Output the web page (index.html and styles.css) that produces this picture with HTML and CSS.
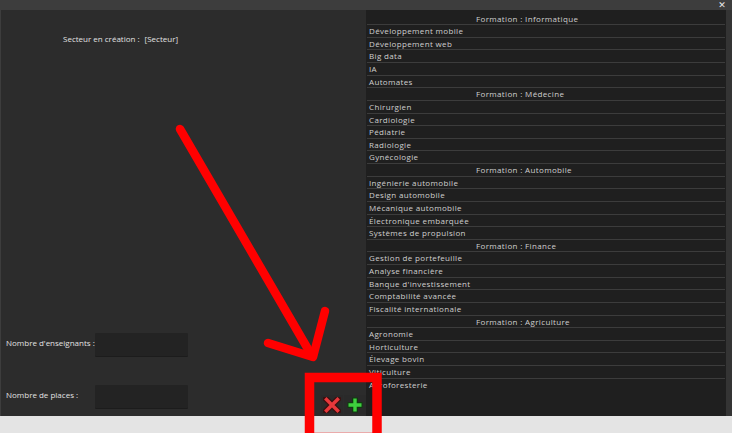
FILE: index.html
```html
<!DOCTYPE html>
<html lang="fr">
<head>
<meta charset="utf-8">
<link rel="stylesheet" href="styles.css">
</head>
<body>
<div class="window">
  <div class="titlebar"><span class="close">✕</span></div>
  <div class="main">
    <div class="left">
      <div class="sector"><span>Secteur en création :</span><span>[Secteur]</span></div>
      <div class="spacer"></div>
      <div class="field"><label>Nombre d'enseignants :</label><div class="input"></div></div>
      <div class="field"><label>Nombre de places :</label><div class="input"></div></div>
    </div>
    <div class="list">
      <div class="row head">Formation : Informatique</div>
      <div class="row">Développement mobile</div>
      <div class="row">Développement web</div>
      <div class="row">Big data</div>
      <div class="row">IA</div>
      <div class="row">Automates</div>
      <div class="row head">Formation : Médecine</div>
      <div class="row">Chirurgien</div>
      <div class="row">Cardiologie</div>
      <div class="row">Pédiatrie</div>
      <div class="row">Radiologie</div>
      <div class="row">Gynécologie</div>
      <div class="row head">Formation : Automobile</div>
      <div class="row">Ingénierie automobile</div>
      <div class="row">Design automobile</div>
      <div class="row">Mécanique automobile</div>
      <div class="row">Électronique embarquée</div>
      <div class="row">Systèmes de propulsion</div>
      <div class="row head">Formation : Finance</div>
      <div class="row">Gestion de portefeuille</div>
      <div class="row">Analyse financière</div>
      <div class="row">Banque d'investissement</div>
      <div class="row">Comptabilité avancée</div>
      <div class="row">Fiscalité internationale</div>
      <div class="row head">Formation : Agriculture</div>
      <div class="row">Agronomie</div>
      <div class="row">Horticulture</div>
      <div class="row">Élevage bovin</div>
      <div class="row">Viticulture</div>
      <div class="row last">Agroforesterie</div>
    </div>
    <div class="scroll"></div>
  </div>
  <div class="footer"></div>

  <div class="buttons">
    <div class="btn">
      <svg width="18" height="16" viewBox="0 0 18 16">
        <path d="M3 2 L15 14 M15 2 L3 14" stroke="#3a1010" stroke-width="6" stroke-linecap="square"/>
        <path d="M3.5 2.5 L14.5 13.5 M14.5 2.5 L3.5 13.5" stroke="#e8383b" stroke-width="3.4" stroke-linecap="square"/>
      </svg>
    </div>
    <div class="btn">
      <svg width="18" height="18" viewBox="0 0 18 18">
        <path d="M9 1.5 V16.5 M1.5 9 H16.5" stroke="#103a10" stroke-width="6"/>
        <path d="M9 2.5 V15.5 M2.5 9 H15.5" stroke="#3ed13e" stroke-width="3.4"/>
      </svg>
    </div>
  </div>

  <svg class="annot" width="732" height="433" viewBox="0 0 732 433">
    <g stroke="#ff0000" fill="none" stroke-linecap="round" stroke-linejoin="round">
      <path d="M180 129 L312 356" stroke-width="8.5"/>
      <path d="M325 311 L313 357 L268 343" stroke-width="8.5"/>
      <rect x="309.5" y="377.5" width="67.5" height="60" stroke-width="9.5" stroke-linecap="butt" stroke-linejoin="miter"/>
    </g>
  </svg>
</div>
</body>
</html>
```
FILE: styles.css
```css
* { box-sizing: border-box; margin: 0; padding: 0; }
html, body { width: 732px; height: 433px; overflow: hidden; }
body {
  background: #e4e4e4;
  font-family: "Open Sans", "Noto Sans", sans-serif;
  font-size: 8px;
  color: #d6d6d6;
}
.window { position: relative; width: 732px; height: 433px; display: flex; flex-direction: column; }
.titlebar {
  height: 10px;
  background: #3d3d3d;
  display: flex;
  justify-content: flex-end;
  align-items: center;
}
.close {
  color: #e8e8e8;
  font-size: 9px;
  font-weight: bold;
  line-height: 10px;
  width: 12px;
  margin-right: 4px;
  text-align: center;
  font-family: "DejaVu Sans", sans-serif;
}
.main {
  height: 406px;
  display: flex;
  background: #3d3d3d;
  padding-left: 1px;
}
.left {
  width: 365px;
  background: #2c2c2c;
  display: flex;
  flex-direction: column;
  padding: 0 0 8px 5px;
}
.sector {
  margin-top: 23px;
  margin-left: 57px;
  display: flex;
  gap: 5px;
  line-height: 11px;
  color: #e2e2e2;
}
.spacer { flex: 1; }
.field {
  display: flex;
  align-items: center;
  height: 24px;
  color: #e2e2e2;
}
.field + .field { margin-top: 28px; }
.field label { width: 89px; margin-top: -3px; white-space: nowrap; }
.input {
  flex: none;
  width: 93px;
  height: 23px;
  background: #232323;
  border-radius: 1px;
  box-shadow: 0 1px 0 #1c1c1c;
}
.list {
  width: 360px;
  background: #1f1f1f;
  padding: 2.5px 1px 0 1px;
  font-size: 8px;
  letter-spacing: 0.35px;
}
.row {
  height: 12.625px;
  line-height: 11.6px;
  border-bottom: 1px solid #3c3c3c;
  padding-left: 2px;
  white-space: nowrap;
  color: #cfcfcf;
}
.row.head { padding-left: 109px; }
.row.last { border-bottom: none; }
.scroll { width: 6px; background: #343434; }
.footer { flex: 1; background: #e4e4e4; }
.buttons {
  position: absolute;
  left: 321px;
  top: 395px;
  display: flex;
  gap: 1px;
}
.btn {
  width: 22px;
  height: 19px;
  background: #2a2a2a;
  display: flex;
  align-items: center;
  justify-content: center;
}
.annot { position: absolute; left: 0; top: 0; pointer-events: none; }
```
